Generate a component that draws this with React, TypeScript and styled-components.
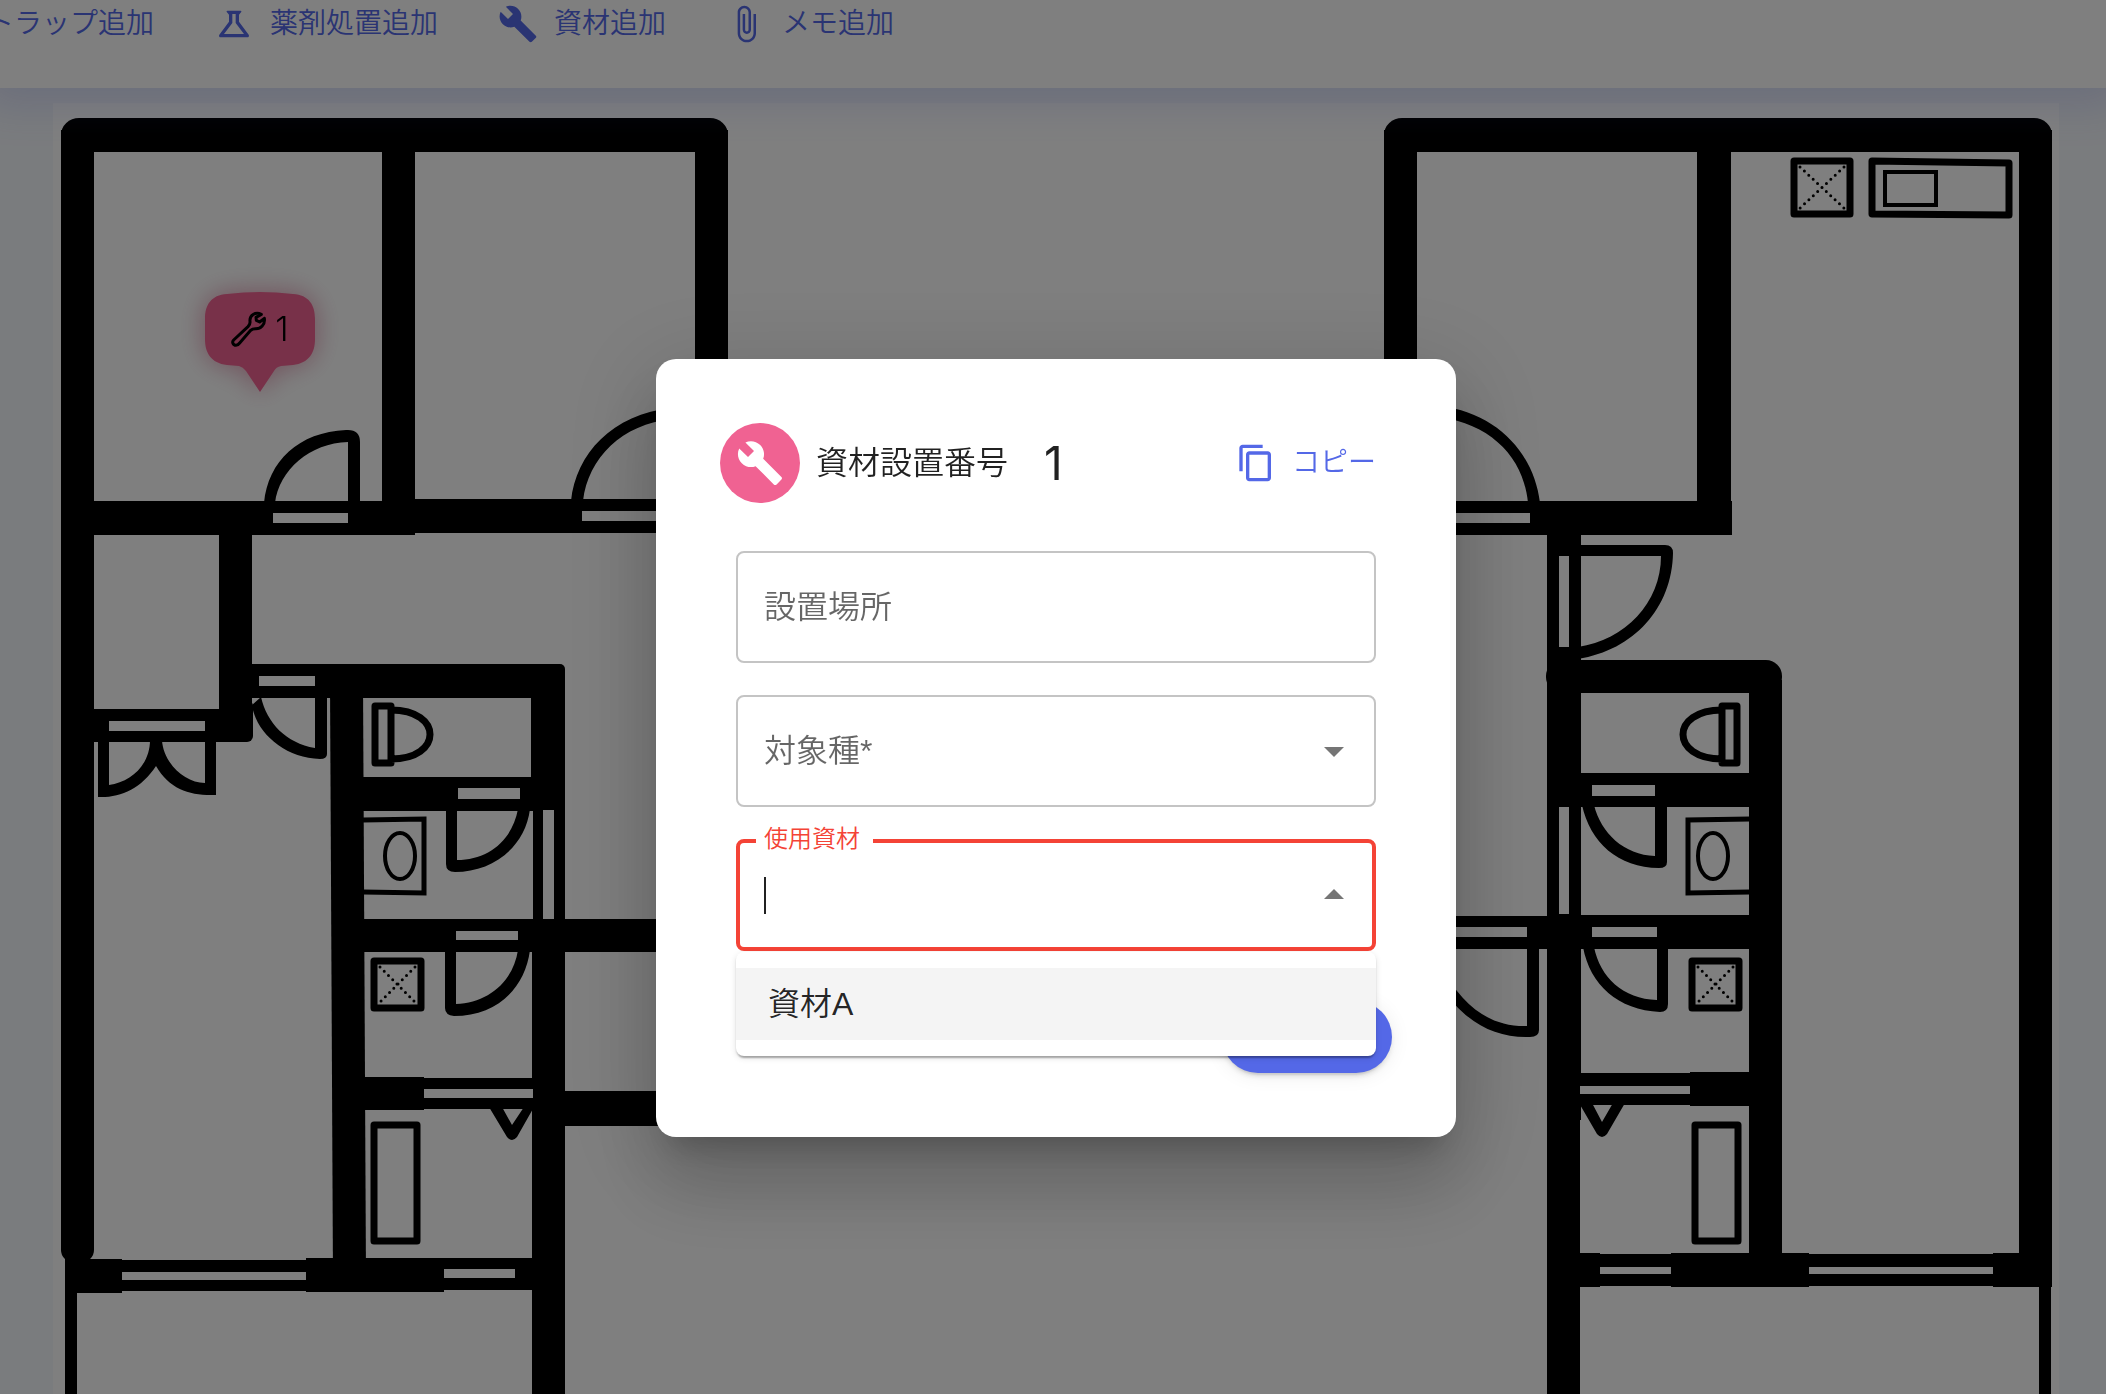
import React, { useState } from 'react';
import styled, { createGlobalStyle, css } from 'styled-components';

const color = {
  primary: '#5468e7',
  pink: '#f06292',
  error: '#f44336',
  text: 'rgba(0, 0, 0, 0.87)',
  label: 'rgba(0, 0, 0, 0.6)',
  outline: '#c4c4c4',
  arrow: 'rgba(0, 0, 0, 0.54)',
  page: '#f5f8fc',
};

const GlobalStyle = createGlobalStyle`
  *, *::before, *::after { box-sizing: border-box; }
  html, body, #root { height: 100%; }
  body {
    margin: 0;
    overflow: hidden;
    background: ${color.page};
    color: ${color.text};
    font-family: "Liberation Sans", "Noto Sans CJK JP", sans-serif;
    font-size: 32px;
    font-weight: 350;
  }
  button, input, select { font: inherit; color: inherit; }
`;

const Page = styled.div`
  display: flex;
  flex-direction: column;
  height: 100%;
  overflow: hidden;
`;

const Toolbar = styled.header`
  position: relative;
  z-index: 1;
  flex: none;
  display: flex;
  height: 88px;
  padding-bottom: 40px;
  background: #fff;
  box-shadow: 0 0 44px 16px rgba(84, 104, 231, 0.2);
`;

/* The toolbar is scrolled sideways, so its first action is partly out of view. */
const ToolbarScroll = styled.nav`
  display: flex;
  gap: 60px;
  margin-left: -70px;
`;

const TextButton = styled.button`
  display: inline-flex;
  align-items: center;
  gap: 16px;
  padding: 0;
  border: 0;
  background: none;
  color: ${color.primary};
  font-size: 28px;
  line-height: 48px;
  white-space: nowrap;
  cursor: pointer;
`;

const Icon = styled.svg<{ $size?: number }>`
  flex: none;
  width: ${({ $size = 40 }) => $size}px;
  height: ${({ $size = 40 }) => $size}px;
  fill: currentColor;
`;

const Canvas = styled.main`
  position: relative;
  margin: 15px 47px 0 53px;
  background: #fff;
`;

const Plan = styled.svg`
  display: block;
  width: 100%;
  height: auto;
`;

const Pin = styled.button`
  position: absolute;
  left: 152px;
  top: 189px;
  width: 110px;
  height: 100px;
  padding: 0;
  border: 0;
  background: none;
  color: #000;
  filter: drop-shadow(0 0 12px rgba(240, 98, 146, 0.5)) drop-shadow(0 0 14px rgba(0, 0, 0, 0.1));
`;

const PinShape = styled.svg`
  position: absolute;
  inset: 0;
  width: 100%;
  height: 100%;
`;

const PinContent = styled.span`
  position: relative;
  display: flex;
  align-items: center;
  justify-content: center;
  gap: 8px;
  height: 74px;
  margin-bottom: 26px;
  font-family: Inter, sans-serif;
  font-size: 34px;
  font-weight: 300;
  line-height: 40px;
`;

const PinIcon = styled.svg`
  width: 36px;
  height: 36px;
  fill: none;
  stroke: #000;
  stroke-width: 9;
  stroke-linejoin: round;
`;

const Backdrop = styled.div`
  position: fixed;
  inset: 0;
  z-index: 2;
  display: flex;
  align-items: center;
  justify-content: center;
  padding: 102px 0 0 6px;
  background: rgba(0, 0, 0, 0.5);
`;

const Dialog = styled.section`
  width: 100%;
  max-width: 800px;
  padding: 64px;
  border-radius: 20px;
  background: #fff;
  box-shadow:
    0 22px 30px -14px rgba(0, 0, 0, 0.2),
    0 48px 76px 6px rgba(0, 0, 0, 0.14),
    0 18px 92px 16px rgba(0, 0, 0, 0.12);
`;

const DialogHeader = styled.header`
  display: flex;
  align-items: center;
  height: 80px;
  padding-right: 16px;
`;

const Avatar = styled.span`
  display: flex;
  align-items: center;
  justify-content: center;
  width: 80px;
  height: 80px;
  border-radius: 50%;
  background: ${color.pink};
  color: #fff;
`;

const Title = styled.h2`
  margin: 0 36px 0 16px;
  font-size: 32px;
  font-weight: inherit;
  line-height: 48px;
`;

const Serial = styled.span`
  flex: 1;
  font-family: Inter, sans-serif;
  font-size: 46px;
  font-weight: 400;
  line-height: 64px;
`;

const Form = styled.form`
  display: flex;
  flex-direction: column;
  gap: 32px;
  margin: 48px 16px 0;
`;

const Field = styled.div<{ $active?: boolean }>`
  position: relative;
  display: grid;
  grid-template-columns: 1fr auto;
  align-items: center;
  height: 112px;
  padding: ${({ $active }) => ($active ? '0 14px 0 24px' : '0 16px 0 26px')};
  border: ${({ $active }) => ($active ? `4px solid ${color.error}` : `2px solid ${color.outline}`)};
  border-radius: 8px;
`;

const FieldLabel = styled.label`
  grid-area: 1 / 1;
  color: ${color.label};
  line-height: 48px;
`;

const RaisedLabel = styled.label`
  position: absolute;
  left: 16px;
  top: -20px;
  padding: 0 13px 0 8px;
  background: #fff;
  color: ${color.error};
  font-size: 24px;
  line-height: 32px;
`;

const control = css`
  grid-area: 1 / 1 / 2 / 2;
  width: 100%;
  height: 48px;
  padding: 0;
  border: 0;
  outline: 0;
  background: none;
  appearance: none;
`;

const TextInput = styled.input`
  ${control}
`;

const Select = styled.select`
  ${control}
  grid-column-end: 3;
`;

const ComboInput = styled.input`
  ${control}
  caret-color: transparent;
`;

const Caret = styled.span`
  grid-area: 1 / 1;
  width: 2px;
  height: 37px;
  background: ${color.text};
`;

const Arrow = styled(Icon)`
  grid-area: 1 / 2;
  color: ${color.arrow};
  pointer-events: none;
`;

const ArrowButton = styled.button`
  display: flex;
  padding: 0;
  border: 0;
  background: none;
`;

const Menu = styled.ul`
  position: absolute;
  z-index: 1;
  top: 109px;
  left: -4px;
  right: -4px;
  margin: 0;
  padding: 16px 0;
  border-radius: 8px;
  background: #fff;
  list-style: none;
  box-shadow:
    0 4px 2px -2px rgba(0, 0, 0, 0.2),
    0 2px 2px 0 rgba(0, 0, 0, 0.14),
    0 2px 6px 0 rgba(0, 0, 0, 0.12);
`;

const Option = styled.li`
  padding: 12px 32px;
  background: #f4f4f4;
  line-height: 48px;
`;

const Actions = styled.footer`
  display: flex;
  justify-content: flex-end;
  margin-top: 50px;
`;

const SubmitButton = styled.button`
  width: 170px;
  height: 72px;
  border: 0;
  border-radius: 36px;
  background: ${color.primary};
  box-shadow:
    0 6px 2px -4px rgba(0, 0, 0, 0.1),
    0 4px 4px 0 rgba(0, 0, 0, 0.08),
    0 2px 20px 0 rgba(0, 0, 0, 0.08);
`;

const BUILD =
  'm22.7 19-9.1-9.1c.9-2.3.4-5-1.5-6.9-2-2-5-2.4-7.4-1.3L9 6 6 9 1.6 4.7C.4 7.1.9 10.1 2.9 12.1c1.9 1.9 4.6 2.4 6.9 1.5l9.1 9.1c.4.4 1 .4 1.4 0l2.3-2.3c.5-.4.5-1.1.1-1.4z';
const FLASK =
  'M13 11.33L18 18H6l5-6.67V6h2m2.96-2H8.04c-.42 0-.65.48-.39.81L9 6.5v4.17L3.2 18.4c-.49.66-.02 1.6.8 1.6h16c.82 0 1.29-.94.8-1.6L15 10.67V6.5l1.35-1.69c.26-.33.03-.81-.39-.81z';
const CLIP =
  'M16.5 6v11.5c0 2.21-1.79 4-4 4s-4-1.79-4-4V5c0-1.38 1.12-2.5 2.5-2.5s2.5 1.12 2.5 2.5v10.5c0 .55-.45 1-1 1s-1-.45-1-1V6H10v9.5c0 1.38 1.12 2.5 2.5 2.5s2.5-1.12 2.5-2.5V5c0-2.21-1.79-4-4-4S7 2.79 7 5v12.5c0 3.04 2.46 5.5 5.5 5.5s5.5-2.46 5.5-5.5V6h-1.5z';
const COPY =
  'M16 1H4c-1.1 0-2 .9-2 2v14h2V3h12V1zm3 4H8c-1.1 0-2 .9-2 2v14c0 1.1.9 2 2 2h11c1.1 0 2-.9 2-2V7c0-1.1-.9-2-2-2zm0 16H8V7h11v14z';
const TRAP = 'M12 2 2 7v10l10 5 10-5V7L12 2z';

function Glyph({ d, size }: { d: string; size?: number }) {
  return (
    <Icon viewBox="0 0 24 24" $size={size} aria-hidden="true">
      <path d={d} />
    </Icon>
  );
}

const actions = [
  { label: 'トラップ追加', icon: TRAP },
  { label: '薬剤処置追加', icon: FLASK },
  { label: '資材追加', icon: BUILD },
  { label: 'メモ追加', icon: CLIP },
];

type Box = [x1: number, y1: number, x2: number, y2: number];

const walls: Box[] = [
  // left unit
  [61, 130, 94, 1250], [382, 130, 415, 520], [695, 130, 728, 533],
  [61, 501, 415, 535], [400, 499, 728, 533], [219, 520, 252, 735],
  [80, 709, 245, 742], [245, 664, 560, 698],
  [531, 670, 565, 811], [533, 800, 543, 930], [554, 800, 565, 930], [532, 940, 565, 1394],
  [350, 777, 565, 811], [350, 919, 730, 952], [350, 1077, 424, 1110], [420, 1078, 540, 1109],
  [550, 1091, 730, 1126], [65, 1259, 122, 1293], [120, 1260, 306, 1291], [306, 1258, 444, 1292],
  [440, 1258, 540, 1290], [65, 1280, 77, 1394],
  // right unit
  [1384, 130, 1417, 535], [1697, 130, 1731, 535], [2019, 130, 2052, 1280],
  [1384, 501, 1732, 535], [1547, 530, 1559, 660], [1569, 530, 1581, 660], [1547, 530, 1581, 556], [1547, 647, 1581, 820],
  [1749, 680, 1782, 1280], [1560, 773, 1770, 807], [1547, 800, 1559, 925], [1569, 800, 1581, 925],
  [1384, 916, 1560, 949], [1560, 915, 1770, 949], [1547, 914, 1581, 1120], [1547, 1100, 1580, 1394],
  [1570, 1073, 1690, 1105], [1690, 1072, 1760, 1106], [1570, 1253, 1600, 1287], [1590, 1254, 1680, 1286],
  [1671, 1253, 1809, 1287], [1800, 1254, 2000, 1286], [1993, 1253, 2052, 1287], [2039, 1280, 2051, 1394],
];

const roundedWalls: { box: Box; r: number }[] = [
  { box: [61, 118, 728, 152], r: 18 }, { box: [1384, 118, 2052, 152], r: 18 },
  { box: [61, 1180, 94, 1262], r: 12 }, { box: [220, 700, 253, 742], r: 6 },
  { box: [500, 664, 565, 698], r: 5 }, { box: [1546, 660, 1782, 693], r: 16 },
];

const openings: Box[] = [
  [273, 513, 348, 523], [582, 511, 700, 521], [109, 721, 205, 731], [259, 676, 315, 686],
  [458, 788, 520, 799], [543, 810, 554, 918], [456, 931, 518, 940], [424, 1089, 533, 1098],
  [122, 1272, 306, 1280], [444, 1269, 515, 1278],
  [1410, 513, 1530, 523], [1559, 556, 1569, 647], [1592, 785, 1655, 796], [1559, 807, 1569, 914],
  [1400, 927, 1527, 937], [1592, 927, 1657, 937], [1580, 1086, 1690, 1094],
  [1600, 1267, 1671, 1274], [1809, 1267, 1993, 1274],
];

/* Door leaves with their swing, each a filled crescent. */
const doors = [
  'M264 503C268 461 299 432 346 430Q360 429 360 442V503H348V442C310 443 279 470 275 503Z',
  'M571 501C576 454 612 414 672 408V419C622 424 588 458 583 501Z',
  'M98 740H109V785C131 782 150 765 150 740H162C163 762 184 783 205 783V740H216V795C191 796 170 790 156 766C141 789 120 798 98 797Z',
  'M315 695H327V754Q327 759 320 759C285 758 256 733 252 705L261 697C267 723 286 743 315 748Z',
  'M446 809H457V860C488 860 512 841 518 809H530C525 848 492 872 455 872Q446 872 446 864Z',
  'M445 950H456V1004C488 1003 513 982 518 950H530C525 989 496 1016 454 1016Q445 1015 445 1008Z',
  'M489 1107L507 1137Q512 1143 517 1137L534 1107H524L512 1125L502 1107Z',
  'M1440 406C1497 413 1534 453 1540 503H1528C1524 459 1493 425 1440 417Z',
  'M1575 545H1665Q1673 545 1673 553C1672 608 1634 650 1578 659V647C1625 640 1661 603 1661 556H1575Z',
  'M1655 805H1667V862Q1667 868 1659 868C1618 868 1590 842 1582 805H1594C1601 833 1624 855 1655 856Z',
  'M1657 947H1668V1004Q1668 1012 1660 1012C1618 1010 1590 985 1583 947H1594C1600 977 1623 999 1657 1000Z',
  'M1527 947H1539V1030Q1539 1037 1530 1037C1494 1038 1466 1023 1440 986V965C1463 1007 1490 1027 1527 1026Z',
  'M1579 1103L1597 1134Q1602 1140 1607 1134L1625 1103H1613L1602 1122L1592 1103Z',
];

function CrossBox({ x, y, w, h }: { x: number; y: number; w: number; h: number }) {
  return (
    <g fill="none" stroke="#000">
      <rect x={x + 3} y={y + 3} width={w - 6} height={h - 6} strokeWidth="7" strokeLinejoin="round" />
      <path
        d={`M${x + 9} ${y + 9}L${x + w - 8} ${y + h - 8}M${x + w - 9} ${y + 9}L${x + 8} ${y + h - 8}`}
        strokeWidth="3"
        strokeLinecap="round"
        strokeDasharray="0 6"
      />
    </g>
  );
}

function FloorPlan() {
  const rect = ([x1, y1, x2, y2]: Box, key: string) => (
    <rect key={key} x={x1} y={y1} width={x2 - x1} height={y2 - y1} />
  );
  return (
    <Plan viewBox="53 103 2006 1291" role="img" aria-label="間取り図">
      {walls.map((b, i) => rect(b, `w${i}`))}
      <path d="M330 680H363L366 1280H333Z" />
      {roundedWalls.map(({ box: [x1, y1, x2, y2], r }, i) => (
        <rect key={i} x={x1} y={y1} width={x2 - x1} height={y2 - y1} rx={r} />
      ))}
      <g fill="#fff">{openings.map((b, i) => rect(b, `o${i}`))}</g>
      {doors.map((d) => (
        <path key={d} d={d} />
      ))}
      <g fill="none" stroke="#000" strokeWidth="7" strokeLinejoin="round">
        <path d="M375 706H391V763H375ZM391 710C443 710 443 759 391 759" />
        <path d="M1737 706H1722V763H1737ZM1722 710C1670 710 1670 759 1722 759" />
        <rect x="374" y="1125" width="43" height="116" />
        <rect x="1695" y="1125" width="43" height="116" />
        <path d="M1872 161L2009 163V215L1872 214Z" />
      </g>
      <g fill="none" stroke="#000" strokeWidth="5">
        <path d="M363 820L424 819V893L363 892" />
        <ellipse cx="400" cy="856" rx="15" ry="23" strokeWidth="4" />
        <path d="M1750 819L1688 820V893L1750 892" />
        <ellipse cx="1713" cy="856" rx="15" ry="23" strokeWidth="4" />
        <rect x="1885" y="172" width="51" height="33" strokeWidth="4" />
      </g>
      <CrossBox x={371} y={958} w={53} h={53} />
      <CrossBox x={1689} y={958} w={53} h={53} />
      <CrossBox x={1791} y={158} w={62} h={59} />
    </Plan>
  );
}

export default function App() {
  const [place, setPlace] = useState('');
  const [material, setMaterial] = useState('');
  return (
    <>
      <GlobalStyle />
      <Page>
        <Toolbar>
          <ToolbarScroll>
            {actions.map(({ label, icon }) => (
              <TextButton key={label} type="button">
                <Glyph d={icon} />
                {label}
              </TextButton>
            ))}
          </ToolbarScroll>
        </Toolbar>
        <Canvas>
          <FloorPlan />
          <Pin type="button">
            <PinShape viewBox="0 0 110 100" aria-hidden="true">
              <path
                fill={color.pink}
                d="M22 2Q55 -2 88 2C104 3 110 13 110 27V47C110 61 104 71 88 73L76 74Q71 75 69 79L55 100L41 79Q38 75 34 74L22 73C6 71 0 61 0 47V27C0 13 6 3 22 2Z"
              />
            </PinShape>
            <PinContent>
              <PinIcon viewBox="127 91 108 108" aria-hidden="true">
                <path d="M218 101C200 92 182 104 184 122C185 130 182 134 178 138L135 178C129 184 133 194 142 194C147 194 150 191 153 187L186 149C190 145 194 144 200 144C216 145 230 132 227 113L213 124L203 119L202 110Z" />
              </PinIcon>
              1
            </PinContent>
          </Pin>
        </Canvas>
      </Page>

      <Backdrop>
        <Dialog role="dialog" aria-modal="true" aria-labelledby="dialog-title">
          <DialogHeader>
            <Avatar>
              <Glyph d={BUILD} size={48} />
            </Avatar>
            <Title id="dialog-title">資材設置番号</Title>
            <Serial>1</Serial>
            <TextButton type="button">
              <Glyph d={COPY} />
              コピー
            </TextButton>
          </DialogHeader>

          <Form>
            <Field>
              <FieldLabel htmlFor="place">設置場所</FieldLabel>
              <TextInput id="place" value={place} onChange={(e) => setPlace(e.target.value)} />
            </Field>
            <Field>
              <FieldLabel htmlFor="species">対象種*</FieldLabel>
              <Arrow viewBox="0 0 24 24" $size={48} aria-hidden="true">
                <path d="M7 10l5 5 5-5z" />
              </Arrow>
              <Select id="species" required defaultValue="">
                <option value="" />
              </Select>
            </Field>
            <Field $active>
              <RaisedLabel htmlFor="material">使用資材</RaisedLabel>
              <Caret />
              <ComboInput
                id="material"
                role="combobox"
                aria-expanded="true"
                aria-controls="material-list"
                value={material}
                onChange={(e) => setMaterial(e.target.value)}
              />
              <ArrowButton type="button" aria-label="閉じる">
                <Arrow viewBox="0 0 24 24" $size={48} aria-hidden="true">
                  <path d="M7 14l5-5 5 5z" />
                </Arrow>
              </ArrowButton>
              <Menu id="material-list" role="listbox">
                <Option role="option" aria-selected="false">
                  資材A
                </Option>
              </Menu>
            </Field>
          </Form>

          <Actions>
            <SubmitButton type="submit" aria-label="保存" />
          </Actions>
        </Dialog>
      </Backdrop>
    </>
  );
}
